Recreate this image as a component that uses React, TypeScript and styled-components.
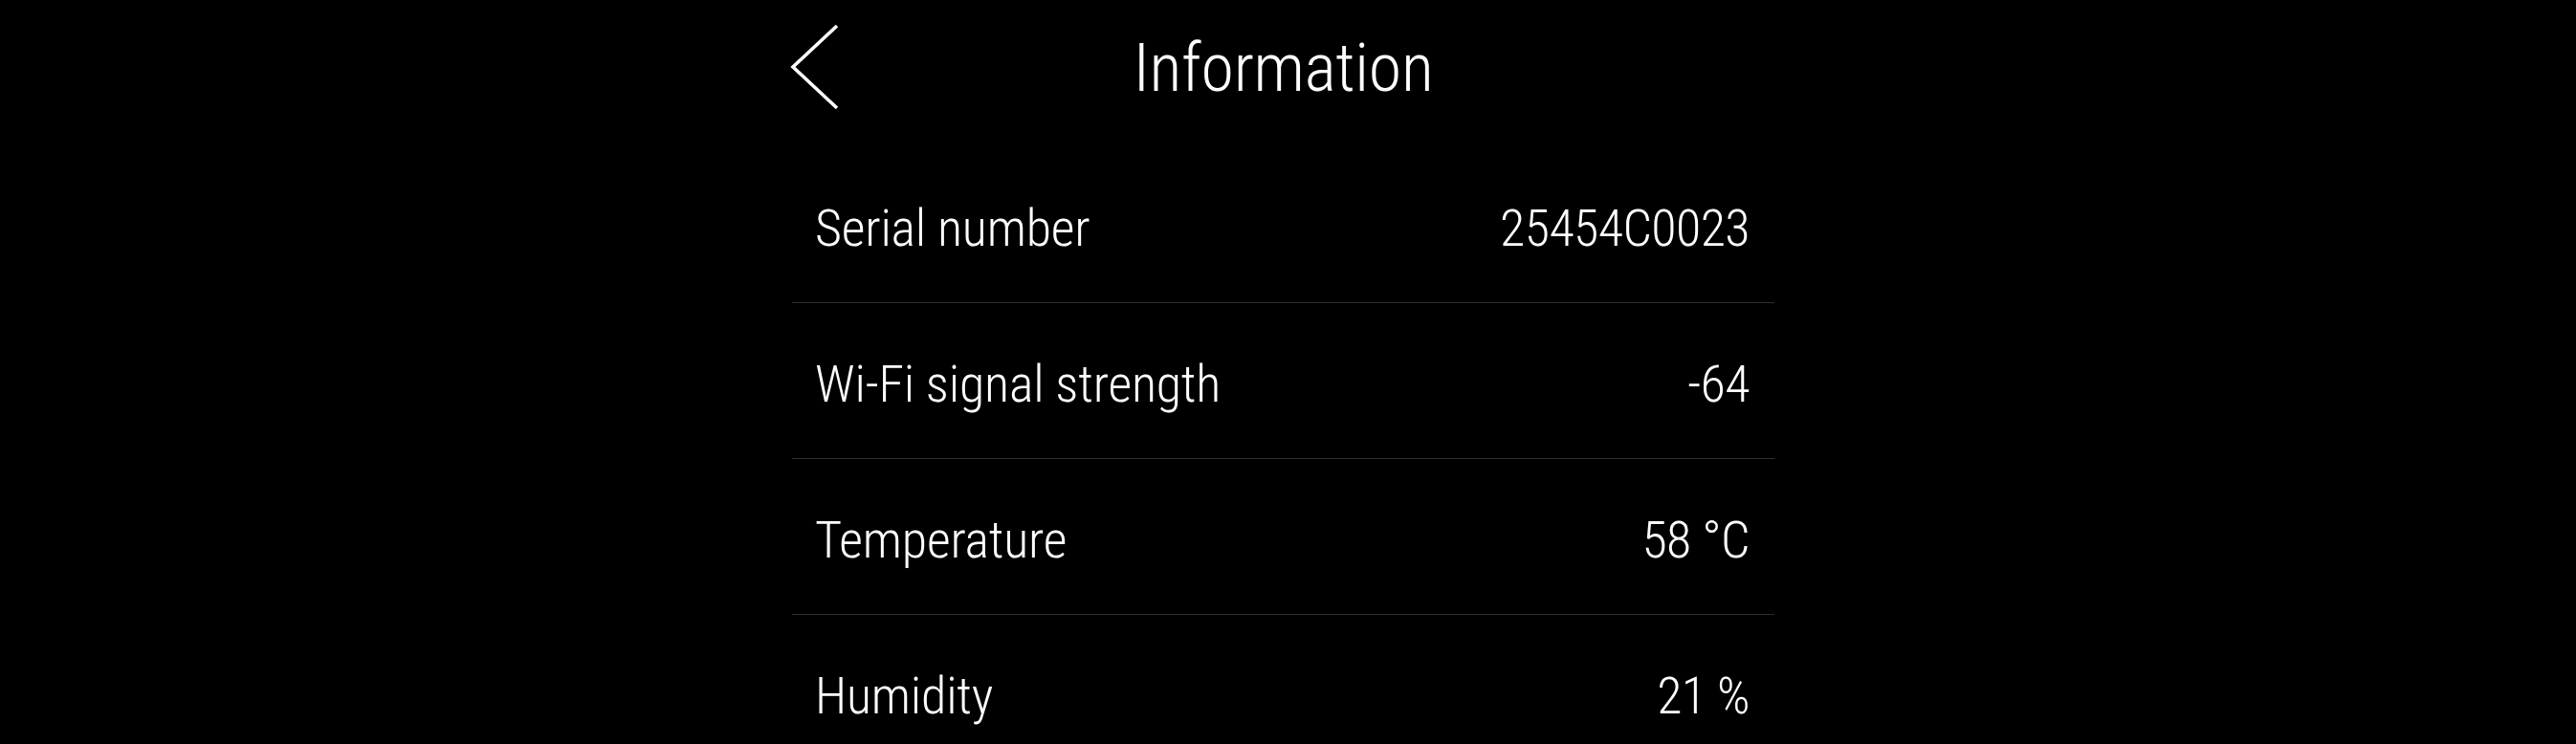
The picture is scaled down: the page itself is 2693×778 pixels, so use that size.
import React from "react";
import styled, { createGlobalStyle } from "styled-components";

const GlobalStyle = createGlobalStyle`
  html, body {
    margin: 0;
    padding: 0;
    background: #000;
    color: #fff;
    overflow: hidden;
  }
  * { box-sizing: border-box; }
`;

const Page = styled.div`
  display: flex;
  justify-content: center;
  padding-right: 10px;
  min-height: 778px;
  background: #000;
  font-family: "Roboto Condensed", "Open Sans", sans-serif;
  font-weight: 300;
`;

const Column = styled.main`
  width: 1027px;
  display: flex;
  flex-direction: column;
`;

const Header = styled.header`
  height: 140px;
  margin-bottom: 14px;
  display: grid;
  grid-template-columns: 1fr auto 1fr;
  align-items: center;
`;

const BackButton = styled.button`
  justify-self: start;
  display: flex;
  align-items: center;
  margin: 0 0 0 -5px;
  padding: 0;
  border: 0;
  background: transparent;
  color: #fff;
  cursor: pointer;
`;

const Title = styled.h1`
  margin: 0;
  padding-top: 2px;
  font-size: 70px;
  line-height: 1;
  font-weight: 300;
  letter-spacing: -0.3px;
  color: #fff;
`;

const List = styled.ul`
  list-style: none;
  margin: 0;
  padding: 0;
`;

const Row = styled.li`
  height: 163px;
  display: flex;
  align-items: center;
  justify-content: space-between;
  padding: 7px 26px 0 24px;
  border-bottom: 1px solid #2f2f2f;
`;

const Label = styled.span`
  font-size: 54px;
  line-height: 1;
  letter-spacing: -0.2px;
`;

const Value = styled.span`
  font-size: 54px;
  line-height: 1;
  letter-spacing: -0.6px;
  font-variant-numeric: tabular-nums;
`;

const ChevronLeft = () => (
  <svg width="58" height="94" viewBox="0 0 58 94" fill="none" aria-hidden="true">
    <path
      d="M52 4 L6 47 L52 90"
      stroke="#fff"
      strokeWidth="3.6"
      strokeLinecap="butt"
      strokeLinejoin="miter"
    />
  </svg>
);

const rows: { label: string; value: string }[] = [
  { label: "Serial number", value: "25454C0023" },
  { label: "Wi-Fi signal strength", value: "-64" },
  { label: "Temperature", value: "58 °C" },
  { label: "Humidity", value: "21 %" },
];

export default function App() {
  return (
    <>
      <GlobalStyle />
      <Page>
        <Column>
          <Header>
            <BackButton aria-label="Back">
              <ChevronLeft />
            </BackButton>
            <Title>Information</Title>
            <span />
          </Header>
          <List>
            {rows.map((r) => (
              <Row key={r.label}>
                <Label>{r.label}</Label>
                <Value>{r.value}</Value>
              </Row>
            ))}
          </List>
        </Column>
      </Page>
    </>
  );
}
